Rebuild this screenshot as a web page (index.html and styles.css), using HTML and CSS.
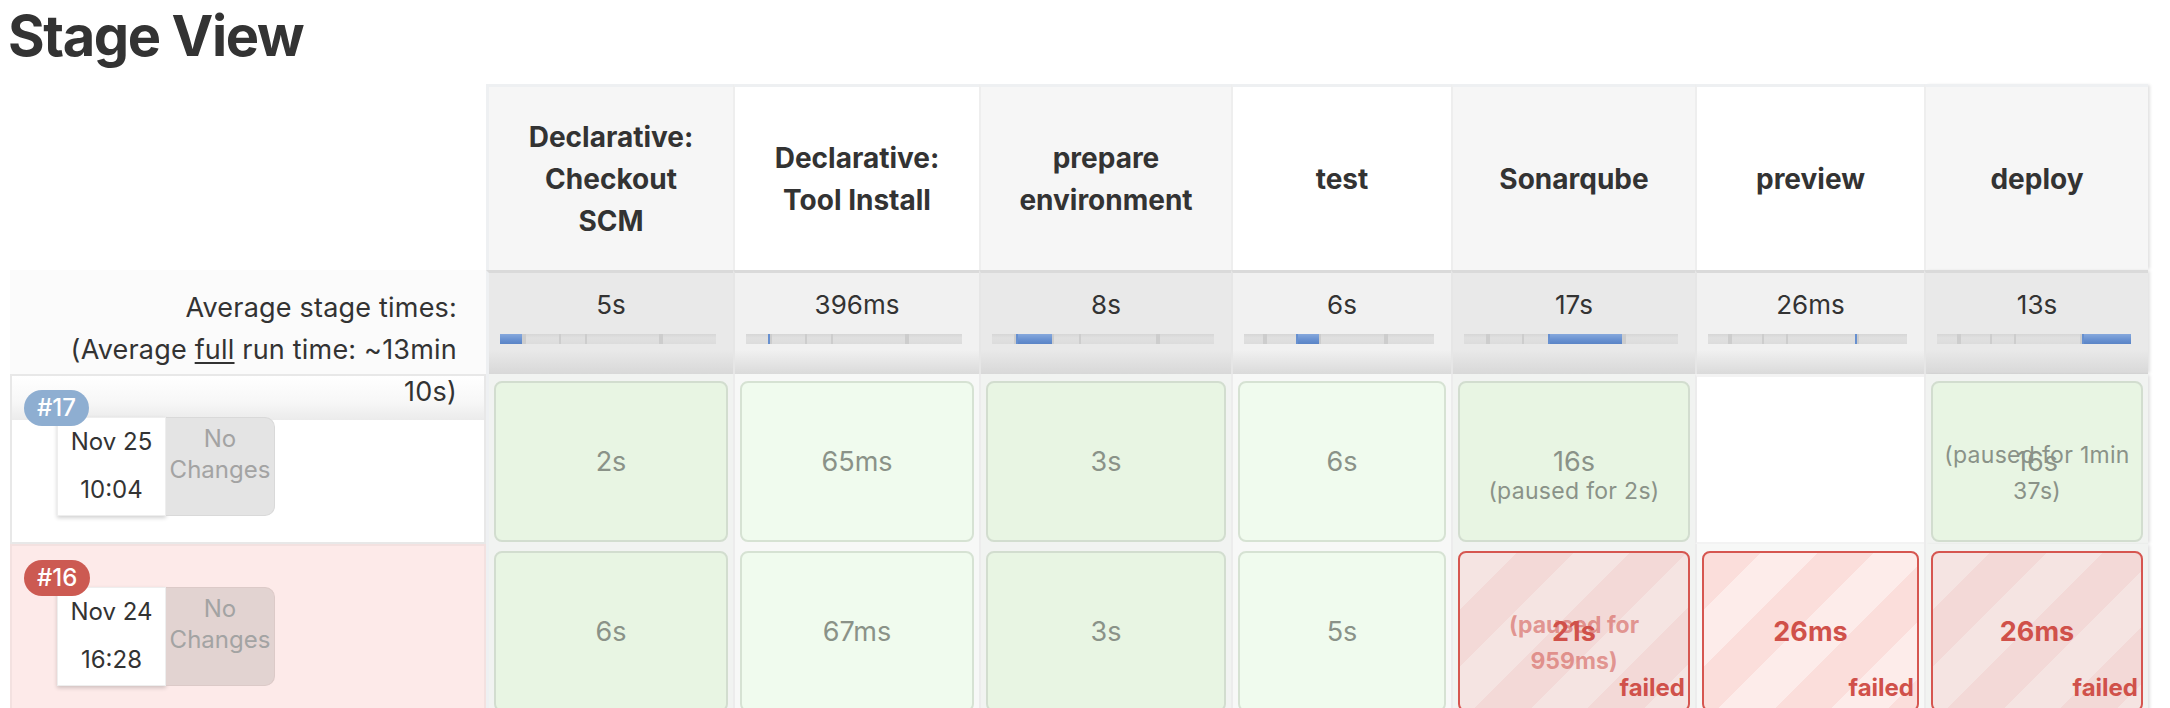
FILE: index.html
```html
<!DOCTYPE html>
<html lang="en">
<head>
<meta charset="utf-8">
<title>Stage View</title>
<link rel="stylesheet" href="styles.css">
</head>
<body>
<h2 class="title">Stage View</h2>
<div class="stage-view">
  <div class="corner"></div>
  <div class="sh odd first"><span class="sh-label">Declarative: Checkout SCM</span></div>
  <div class="sh even"><span class="sh-label">Declarative: Tool Install</span></div>
  <div class="sh odd"><span class="sh-label">prepare environment</span></div>
  <div class="sh even"><span class="sh-label">test</span></div>
  <div class="sh odd"><span class="sh-label">Sonarqube</span></div>
  <div class="sh even"><span class="sh-label">preview</span></div>
  <div class="sh odd last"><span class="sh-label">deploy</span></div>

  <div class="avg-label"><div class="avg-text">Average stage times:<br>(Average <u>full</u> run time: ~13min 10s)</div></div>
  <div class="avg odd first"><div class="avg-time">5s</div><div class="bar"><span class="seg cur" style="width:10.12%"></span><span class="seg" style="width:0.8%"></span><span class="seg" style="width:16.19%"></span><span class="seg" style="width:12.14%"></span><span class="seg" style="width:34.4%"></span><span class="seg" style="width:0.05%"></span><span class="seg" style="width:26.3%"></span></div></div>
  <div class="avg even"><div class="avg-time">396ms</div><div class="bar"><span class="seg" style="width:10.12%"></span><span class="seg cur" style="width:0.8%"></span><span class="seg" style="width:16.19%"></span><span class="seg" style="width:12.14%"></span><span class="seg" style="width:34.4%"></span><span class="seg" style="width:0.05%"></span><span class="seg" style="width:26.3%"></span></div></div>
  <div class="avg odd"><div class="avg-time">8s</div><div class="bar"><span class="seg" style="width:10.12%"></span><span class="seg" style="width:0.8%"></span><span class="seg cur" style="width:16.19%"></span><span class="seg" style="width:12.14%"></span><span class="seg" style="width:34.4%"></span><span class="seg" style="width:0.05%"></span><span class="seg" style="width:26.3%"></span></div></div>
  <div class="avg even"><div class="avg-time">6s</div><div class="bar"><span class="seg" style="width:10.12%"></span><span class="seg" style="width:0.8%"></span><span class="seg" style="width:16.19%"></span><span class="seg cur" style="width:12.14%"></span><span class="seg" style="width:34.4%"></span><span class="seg" style="width:0.05%"></span><span class="seg" style="width:26.3%"></span></div></div>
  <div class="avg odd"><div class="avg-time">17s</div><div class="bar"><span class="seg" style="width:10.12%"></span><span class="seg" style="width:0.8%"></span><span class="seg" style="width:16.19%"></span><span class="seg" style="width:12.14%"></span><span class="seg cur" style="width:34.4%"></span><span class="seg" style="width:0.05%"></span><span class="seg" style="width:26.3%"></span></div></div>
  <div class="avg even"><div class="avg-time">26ms</div><div class="bar"><span class="seg" style="width:10.12%"></span><span class="seg" style="width:0.8%"></span><span class="seg" style="width:16.19%"></span><span class="seg" style="width:12.14%"></span><span class="seg" style="width:34.4%"></span><span class="seg cur" style="width:0.05%"></span><span class="seg" style="width:26.3%"></span></div></div>
  <div class="avg odd last"><div class="avg-time">13s</div><div class="bar"><span class="seg" style="width:10.12%"></span><span class="seg" style="width:0.8%"></span><span class="seg" style="width:16.19%"></span><span class="seg" style="width:12.14%"></span><span class="seg" style="width:34.4%"></span><span class="seg" style="width:0.05%"></span><span class="seg cur" style="width:26.3%"></span></div></div>

  <div class="build build-first">
    <span class="badge badge-ok">#17</span>
    <div class="cards">
      <div class="date">Nov 25<br>10:04</div>
      <div class="changes">No Changes</div>
    </div>
  </div>
  <div class="cell odd first"><div class="wrap ok"><span class="dur">2s</span></div></div>
  <div class="cell even"><div class="wrap ok"><span class="dur">65ms</span></div></div>
  <div class="cell odd"><div class="wrap ok"><span class="dur">3s</span></div></div>
  <div class="cell even"><div class="wrap ok"><span class="dur">6s</span></div></div>
  <div class="cell odd"><div class="wrap ok"><span class="dur">16s</span><span class="paused">(paused for 2s)</span></div></div>
  <div class="cell even empty"></div>
  <div class="cell odd last"><div class="wrap ok"><span class="dur">16s</span><span class="paused">(paused for 1min 37s)</span></div></div>

  <div class="build build-failed">
    <span class="badge badge-fail">#16</span>
    <div class="cards">
      <div class="date">Nov 24<br>16:28</div>
      <div class="changes">No Changes</div>
    </div>
  </div>
  <div class="cell odd first"><div class="wrap ok"><span class="dur">6s</span></div></div>
  <div class="cell even"><div class="wrap ok"><span class="dur">67ms</span></div></div>
  <div class="cell odd"><div class="wrap ok"><span class="dur">3s</span></div></div>
  <div class="cell even"><div class="wrap ok"><span class="dur">5s</span></div></div>
  <div class="cell odd"><div class="wrap fail"><span class="paused">(paused for 959ms)</span><span class="dur">21s</span><span class="failed">failed</span></div></div>
  <div class="cell even"><div class="wrap fail"><span class="dur">26ms</span><span class="failed">failed</span></div></div>
  <div class="cell odd last"><div class="wrap fail"><span class="dur">26ms</span><span class="failed">failed</span></div></div>
</div>
</body>
</html>
```
FILE: styles.css
```css
* { box-sizing: border-box; }

body {
  margin: 0;
  padding: 0 0 0 8px;
  background: #fff;
  color: #333;
  font-family: Inter, "Noto Sans", "Liberation Sans", sans-serif;
  overflow: hidden;
}

.title {
  margin: 3px 0 14px;
  font-size: 56px;
  line-height: 67px;
  font-weight: 700;
  letter-spacing: -1.4px;
  color: #333;
}

.stage-view {
  display: grid;
  grid-template-columns: 478px 247px 246px 252px 220px 244px 229px 224px;
  grid-template-rows: 186px 104px 170px 170px;
}

/* ---------- header ---------- */
.corner { background: #fff; }

.sh {
  display: flex;
  align-items: center;
  justify-content: center;
  text-align: center;
  border-top: 3px solid #eef0f2;
  border-left: 2px solid #eeeeee;
  padding: 0 8px;
  font-size: 28px;
  line-height: 42px;
  font-weight: 700;
  color: #333;
}
.sh-label { max-width: 186px; }
.sh.odd { background: #f6f6f6; }
.sh.even { background: #fff; }
.first { border-left: 3px solid #eef0f2 !important; }
.last { box-shadow: 3px 0 3px -1px rgba(0, 0, 0, 0.12); }

/* ---------- averages ---------- */
.avg-label {
  z-index: 2;
  margin-left: 2px;
  background: #fbfbfb;
  padding: 17px 29px 0 30px;
  font-size: 27px;
  line-height: 42px;
  letter-spacing: 0.2px;
  text-align: right;
  color: #333;
}
.avg-text { margin-left: auto; max-width: 405px; }
.avg-text u { text-decoration-thickness: 2px; text-underline-offset: 3px; }

.avg {
  border-top: 3px solid #dadada;
  border-left: 2px solid #e6e6e6;
  padding-top: 16px;
}
.avg.odd { background: linear-gradient(to bottom, #e9e9e9 0, #e9e9e9 76%, #d8d8d8 100%); }
.avg.even { background: linear-gradient(to bottom, #f1f1f1 0, #f1f1f1 76%, #dadada 100%); }

.avg-time {
  text-align: center;
  font-size: 26px;
  line-height: 32px;
  color: #333;
}

.bar {
  display: flex;
  height: 10px;
  margin: 13px 17px 0 11px;
  overflow: hidden;
  background: linear-gradient(to bottom, #d6d6d6, #e0e0e0 40%, #dcdcdc);
}
.seg {
  flex: none;
  height: 100%;
  border-left: 2px solid #cdcdcd;
}
.seg:first-child { border-left: none; }
.seg.cur {
  background: linear-gradient(to bottom, #86a8dc, #6790d0 60%, #5a84c6);
  border-left-color: #6790d0;
}

/* ---------- builds ---------- */
.build {
  margin-left: 2px;
  border: 2px solid #e8e8e8;
  padding: 14px 0 0 12px;
  display: flex;
  flex-direction: column;
  align-items: flex-start;
}
.build-first {
  background: linear-gradient(to bottom, #ffffff 0, #f7f7f7 26px, #ebebeb 44px, #ffffff 44px, #ffffff 100%);
}
.build-failed {
  background: #fdeae9;
  border-color: #f3e1e0;
}

.badge {
  position: relative;
  z-index: 1;
  height: 36px;
  padding: 0 13px;
  border-radius: 18px;
  font-size: 24px;
  line-height: 36px;
  font-weight: 500;
  color: #fff;
}
.badge-ok { background: #8eaed1; }
.badge-fail { background: #cc5a52; }

.cards {
  display: flex;
  margin: -9px 0 0 33px;
}
.date {
  width: 109px;
  height: 99px;
  background: #fff;
  border: 1px solid #eeeeee;
  box-shadow: 0 2px 4px rgba(0, 0, 0, 0.18);
  text-align: center;
  font-size: 24px;
  line-height: 48px;
  color: #333;
}
.changes {
  width: 109px;
  height: 99px;
  padding-top: 5px;
  background: #e4e4e4;
  border: 1px solid #d9d9d9;
  border-left: none;
  border-radius: 0 10px 10px 0;
  text-align: center;
  font-size: 24px;
  line-height: 31px;
  color: #a3a3a3;
}
.build-failed .changes {
  background: #e2d3d1;
  border-color: #dccac8;
}

/* ---------- stage cells ---------- */
.cell {
  border-left: 2px solid #ececec;
  padding: 7px 5px 2px;
}
.cell.odd { background: #f1f3f1; }
.cell.even { background: #f7f8f7; }
.cell.empty { background: #fff; border-top: 3px solid #f3f3f3; border-bottom: 2px solid #f3f3f3; }

.wrap {
  position: relative;
  height: 100%;
  border: 2px solid #d2ddcf;
  border-radius: 8px;
  display: flex;
  align-items: center;
  justify-content: center;
}
.odd .wrap.ok { background: #e8f5e3; }
.even .wrap.ok { background: #f0fbee; border-color: #d6e2d3; }

.dur {
  position: relative;
  font-size: 27px;
  color: #8a9288;
}

.paused {
  position: absolute;
  left: 0;
  right: 0;
  bottom: 31px;
  padding: 0 8px;
  text-align: center;
  font-size: 23px;
  line-height: 36px;
  letter-spacing: 0.3px;
  color: #8a9288;
}

.wrap.fail {
  border-color: #d65650;
}
.odd .wrap.fail {
  background: repeating-linear-gradient(135deg, #f5e4e2 0, #f5e4e2 40px, #f3d9d7 40px, #f3d9d7 80px);
}
.even .wrap.fail {
  background: repeating-linear-gradient(135deg, #fbdedb 0, #fbdedb 40px, #fdecea 40px, #fdecea 80px);
}
.fail .dur {
  font-weight: 700;
  color: #d0514a;
}
.fail .paused {
  font-weight: 700;
  letter-spacing: 0;
  color: rgba(208, 81, 74, 0.55);
}
.failed {
  position: absolute;
  right: 3px;
  bottom: 10px;
  font-size: 24px;
  line-height: 24px;
  font-weight: 700;
  color: #d0514a;
}
```
